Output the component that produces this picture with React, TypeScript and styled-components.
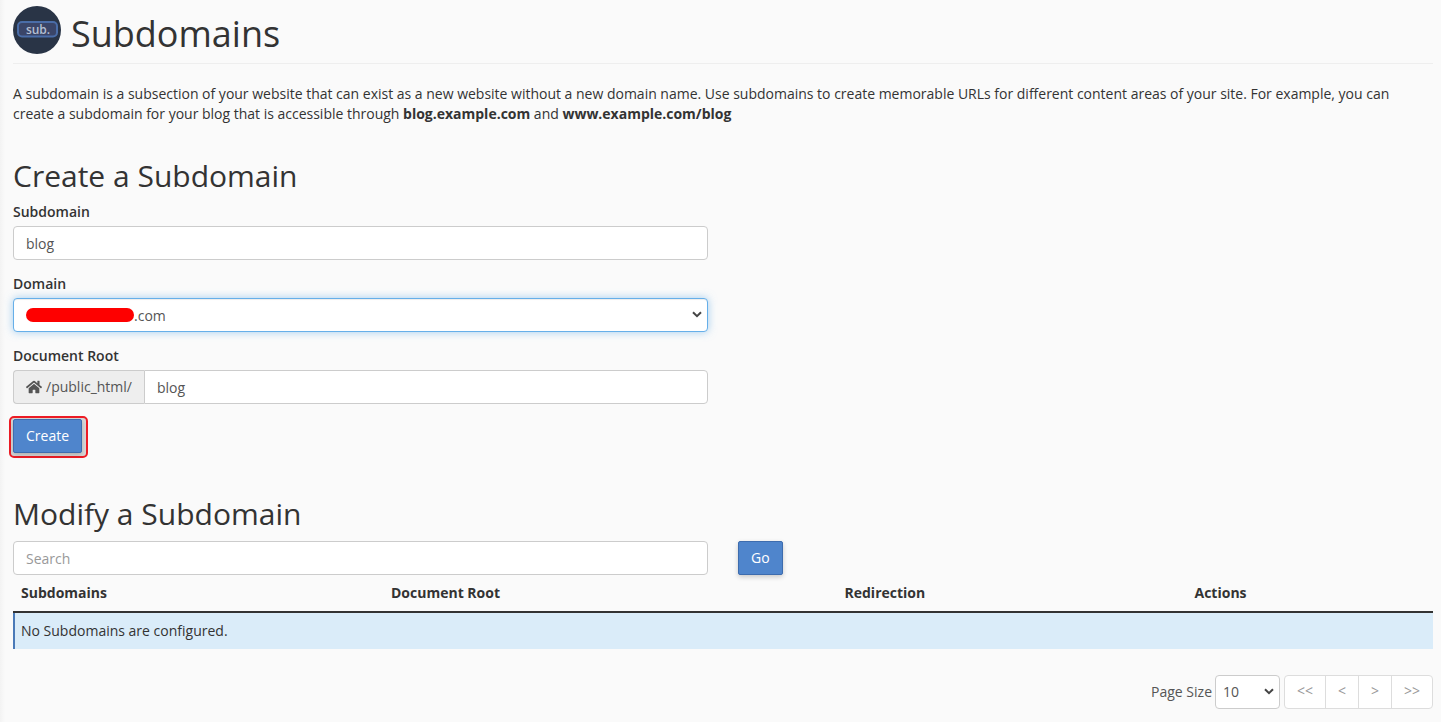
import styled, { createGlobalStyle } from "styled-components";
import { FaHome } from "react-icons/fa";

const Global = createGlobalStyle`
    html, body {
        margin: 0;
        padding: 0;
        background: #fafafa;
    }
    body {
        font-family: "Open Sans", "Liberation Sans", sans-serif;
        font-size: 14px;
        line-height: 20px;
        color: #333;
    }
`;

const Page = styled.div`
    height: 722px;
    overflow: hidden;
    box-sizing: border-box;
    padding: 6px 8px 0 13px;
    background: linear-gradient(to right, #f3f3f3, #fafafa 5px);
`;

const Header = styled.header`
    display: flex;
    align-items: center;
    gap: 10px;
    height: 48px;
    padding-bottom: 9px;
    border-bottom: 1px solid #eee;
`;

const Title = styled.h1`
    margin: 8px 0 0;
    font-size: 36px;
    font-weight: 400;
    line-height: 54px;
    color: #333;
`;

const Intro = styled.p`
    margin: 20px 0 0;
    color: #333;
    letter-spacing: -0.006px;
`;

const IntroLine = styled.span`
    display: block;
    white-space: nowrap;
`;

const SectionTitle = styled.h2<{ $top: number }>`
    margin: ${props => props.$top}px 0 0;
    font-size: 30px;
    font-weight: 400;
    line-height: 42px;
    color: #333;
`;

const CreateTitle = styled(SectionTitle)`
    margin-bottom: 4px;
`;

const Field = styled.div`
    width: 695px;
    margin-bottom: 13px;
`;

const Label = styled.label`
    display: block;
    height: 25px;
    line-height: 20px;
    font-weight: 600;
    color: #333;
    padding-top: 1px;
    box-sizing: border-box;
`;

const Input = styled.input`
    display: block;
    box-sizing: border-box;
    width: 100%;
    height: 34px;
    padding: 6px 12px;
    font: inherit;
    color: #555;
    background: #fff;
    border: 1px solid #ccc;
    border-radius: 4px;
    outline: none;
    &::placeholder {
        color: #999;
        opacity: 1;
    }
`;

const SelectBox = styled.div`
    position: relative;
    box-sizing: border-box;
    height: 34px;
    display: flex;
    align-items: center;
    padding: 1px 12px 0;
    background: #fff;
    color: #555;
    border: 1px solid #66afe9;
    border-radius: 4px;
    box-shadow: inset 0 1px 1px rgba(0, 0, 0, 0.075), 0 0 8px rgba(102, 175, 233, 0.6);
`;

const Redaction = styled.span`
    width: 108px;
    height: 14px;
    margin-top: -1px;
    border-radius: 7px;
    background: #fe0000;
`;

const Chevron = styled.svg`
    position: absolute;
    right: 5px;
    top: 50%;
    margin-top: -4px;
    width: 10px;
    height: 7px;
`;

const InputGroup = styled.div`
    display: flex;
    height: 34px;
`;

const Addon = styled.span`
    display: flex;
    align-items: center;
    gap: 4px;
    box-sizing: border-box;
    width: 131px;
    padding: 0 12px;
    color: #555;
    background: #eee;
    border: 1px solid #ccc;
    border-right: 0;
    border-radius: 4px 0 0 4px;
    white-space: nowrap;
`;

const GroupInput = styled(Input)`
    flex: 1;
    width: auto;
    border-radius: 0 4px 4px 0;
`;

const CreateOutline = styled.div`
    display: block;
    width: fit-content;
    margin: -1px 0 0 -4px;
    padding: 1px 4px 3px 2px;
    border: 2px solid #ee1c25;
    border-radius: 5px;
    background: #d8d8d8;
    line-height: 0;
`;

const PrimaryButton = styled.button`
    box-sizing: border-box;
    height: 34px;
    padding: 6px 12px;
    font: inherit;
    color: #fff;
    background: #4f85cc;
    border: 1px solid #3d6cae;
    border-radius: 2px;
    box-shadow: 0 2px 5px rgba(0, 0, 0, 0.2);
`;

const SearchRow = styled.div`
    display: flex;
    margin-top: 6px;
    gap: 30px;
`;

const SearchInput = styled(Input)`
    width: 695px;
`;

const TableHead = styled.div`
    display: grid;
    grid-template-columns: 370px 453.5px 350px 1fr;
    height: 35px;
    align-items: center;
    padding: 0 8px 1px;
    font-weight: 700;
    color: #333;
    border-bottom: 2px solid #333;
`;

const EmptyRow = styled.div`
    height: 36px;
    display: flex;
    align-items: center;
    padding-left: 6px;
    color: #333;
    background: #daecf9;
    border-left: 2px solid #4a7ab8;
`;

const Footer = styled.div`
    display: flex;
    justify-content: flex-end;
    align-items: center;
    margin-top: 26px;
    height: 34px;
`;

const SizeLabel = styled.span`
    margin-right: 3px;
    color: #555;
`;

const SizeSelect = styled.div`
    position: relative;
    box-sizing: border-box;
    width: 65px;
    height: 34px;
    margin-right: 4px;
    padding: 0 7px;
    display: flex;
    align-items: center;
    color: #555;
    background: #fff;
    border: 1px solid #ccc;
    border-radius: 4px;
`;

const Pager = styled.div`
    display: flex;
    height: 34px;
    box-sizing: border-box;
    background: #fff;
    border: 1px solid #ddd;
    border-radius: 4px;
`;

const PageLink = styled.span<{ $width: number }>`
    display: flex;
    align-items: center;
    justify-content: center;
    width: ${props => props.$width}px;
    color: #999;
    padding-bottom: 2px;
    box-sizing: border-box;
    & + & {
        border-left: 1px solid #ddd;
    }
`;

const Arrow = () => (
    <Chevron viewBox="0 0 10 7">
        <path d="M1 1.2 5 5.2 9 1.2" fill="none" stroke="#444" strokeWidth="2" />
    </Chevron>
);

const SubLogo = () => (
    <svg width="48" height="48" viewBox="0 0 48 48">
        <circle cx="24" cy="24" r="24" fill="#293446" />
        <rect x="5" y="16" width="39" height="14.5" rx="4" fill="#3a4568" stroke="#4a6da8" strokeWidth="2" />
        <text x="25" y="28" textAnchor="middle" fontFamily="Open Sans, sans-serif" fontSize="12" fontWeight="600" fill="#b4bfd2">
            sub.
        </text>
    </svg>
);

export default function App() {
    return (
        <Page>
            <Global />
            <Header>
                <SubLogo />
                <Title>Subdomains</Title>
            </Header>
            <Intro>
                <IntroLine>
                    A subdomain is a subsection of your website that can exist as a new website without a new domain name. Use
                    subdomains to create memorable URLs for different content areas of your site. For example, you can
                </IntroLine>
                <IntroLine>
                    create a subdomain for your blog that is accessible through <b>blog.example.com</b> and{" "}
                    <b>www.example.com/blog</b>
                </IntroLine>
            </Intro>

            <CreateTitle $top={31}>Create a Subdomain</CreateTitle>
            <Field>
                <Label>Subdomain</Label>
                <Input defaultValue="blog" />
            </Field>
            <Field>
                <Label>Domain</Label>
                <SelectBox>
                    <Redaction />
                    .com
                    <Arrow />
                </SelectBox>
            </Field>
            <Field>
                <Label>Document Root</Label>
                <InputGroup>
                    <Addon>
                        <FaHome size={16} />
                        /public_html/
                    </Addon>
                    <GroupInput defaultValue="blog" />
                </InputGroup>
            </Field>
            <CreateOutline>
                <PrimaryButton>Create</PrimaryButton>
            </CreateOutline>

            <SectionTitle $top={35}>Modify a Subdomain</SectionTitle>
            <SearchRow>
                <SearchInput placeholder="Search" />
                <PrimaryButton>Go</PrimaryButton>
            </SearchRow>
            <TableHead>
                <span>Subdomains</span>
                <span>Document Root</span>
                <span>Redirection</span>
                <span>Actions</span>
            </TableHead>
            <EmptyRow>No Subdomains are configured.</EmptyRow>
            <Footer>
                <SizeLabel>Page Size</SizeLabel>
                <SizeSelect>
                    10
                    <Arrow />
                </SizeSelect>
                <Pager>
                    <PageLink $width={40}>&lt;&lt;</PageLink>
                    <PageLink $width={33}>&lt;</PageLink>
                    <PageLink $width={33}>&gt;</PageLink>
                    <PageLink $width={41}>&gt;&gt;</PageLink>
                </Pager>
            </Footer>
        </Page>
    );
}
